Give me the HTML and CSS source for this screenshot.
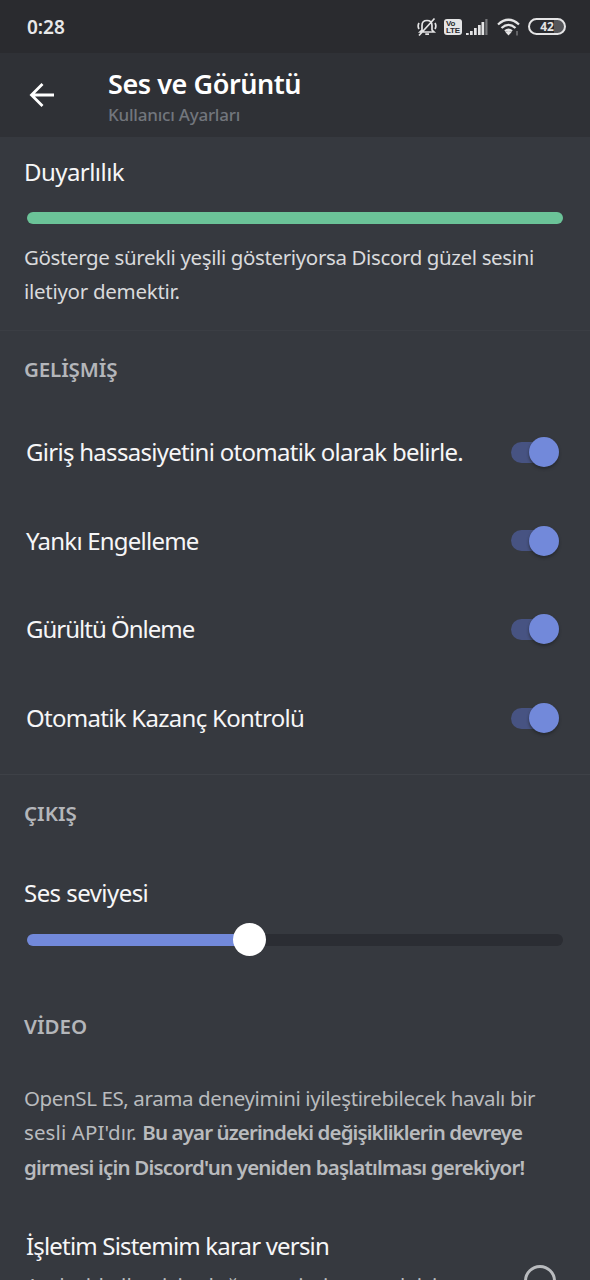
FILE: index.html
```html
<!DOCTYPE html>
<html lang="tr">
<head>
<meta charset="utf-8">
<title>Ses ve Görüntü</title>
<link rel="stylesheet" href="styles.css">
</head>
<body>
<div class="screen">
  <div class="status">
    <span class="clock">0:28</span>
    <div class="status-icons">
      <svg class="bell" width="20" height="20" viewBox="0 0 20 20" fill="none" stroke="#e4e4e5" stroke-width="1.7">
        <path d="M5 14V8.500C5 5.500 7 3.500 10 3.500S15 5.500 15 8.500V13L17 15H3L5 13M8.300 17.200H12M17.500 1.500 2 18.500M2 6Q.3 9 2 12M18 6Q19.700 9 18 12"/>
      </svg>
      <div class="volte"><span>Vo</span><span>LTE</span></div>
      <svg class="signal" width="22" height="16" viewBox="0 0 22 16" fill="#e4e4e5">
        <path d="M0 14h2.700v2H0zM4 12h2.700v4H4zM8 9h2.700v7H8zM12 6h2.700v10H12zM15.500 3h2.700v13h-2.700z"/><path fill="#77787b" d="M19.300 0h2.200v16h-2.200z"/>
      </svg>
      <svg class="wifi" width="24" height="18" viewBox="0 0 24 18" fill="none" stroke="#e4e4e5" stroke-width="2.300">
        <path d="M1 6.500Q11.500-3 22 6.500M4.500 10Q11.500 3.700 18.500 10M8 13.200Q11.500 10.400 15 13.200"/><path fill="#e4e4e5" stroke="none" d="M8.500 14.200Q11.500 12 14.500 14.200L11.500 17.500z"/><path stroke="#77787b" stroke-width="1.500" d="M20 13v4.500"/>
      </svg>
      <div class="battery">42</div>
    </div>
  </div>
  <header class="header">
    <svg class="back" width="26" height="26" viewBox="0 0 26 26" fill="none" stroke="#fff" stroke-width="2.800"><path d="M25 13H3M13.500 2 2.500 13l11 11"/></svg>
    <div class="titles"><h1>Ses ve Görüntü</h1><p>Kullanıcı Ayarları</p></div>
  </header>
  <section class="sensitivity">
    <h2 class="label duy">Duyarlılık</h2>
    <div class="meter"></div>
    <p class="copy"><span class="c1">Gösterge sürekli yeşili gösteriyorsa Discord güzel sesini</span><br><span class="c2">iletiyor demektir.</span></p>
  </section>
  <section class="advanced">
    <h3 class="heading g">GELİŞMİŞ</h3>
    <div class="row"><span class="label r1">Giriş hassasiyetini otomatik olarak belirle.</span><i class="switch"></i></div>
    <div class="row"><span class="label r2">Yankı Engelleme</span><i class="switch"></i></div>
    <div class="row"><span class="label r3">Gürültü Önleme</span><i class="switch"></i></div>
    <div class="row"><span class="label r4">Otomatik Kazanç Kontrolü</span><i class="switch"></i></div>
  </section>
  <section class="output">
    <h3 class="heading o">ÇIKIŞ</h3>
    <h2 class="label ses">Ses seviyesi</h2>
    <div class="slider"><div class="fill"></div><div class="knob"></div><div class="rest"></div></div>
  </section>
  <section class="video">
    <h3 class="heading v">VİDEO</h3>
    <p class="copy muted"><span class="p1">OpenSL ES, arama deneyimini iyileştirebilecek havalı bir</span><br><span class="p2">sesli API'dır. </span><b class="p3">Bu ayar üzerindeki değişikliklerin devreye</b><br><b class="p4">girmesi için Discord'un yeniden başlatılması gerekiyor!</b></p>
    <div class="choice">
      <div><div class="label os">İşletim Sistemim karar versin</div><p class="hint">Android ailen için doğru seçimi yapmak için</p></div>
      <i class="radio"></i>
    </div>
  </section>
</div>
</body>
</html>
```
FILE: styles.css
```css
* { box-sizing: border-box; margin: 0; padding: 0; }
body { background: #36393f; font-family: "Noto Sans", "Open Sans", sans-serif; color: #f6f6f7; }
.screen { width: 590px; height: 1280px; overflow: hidden; display: flex; flex-direction: column; }
.screen > * { flex-shrink: 0; }
.status { height: 53px; background: #2a2b2f; display: flex; justify-content: space-between; padding: 0 24px 0 27px; align-items: center; }
.clock { font: 600 19px/26px "Noto Sans", sans-serif; color: #e8e8e9; }
.status-icons { display: flex; align-items: center; }
.volte { width: 18px; height: 16px; margin: 0 4px 0 7px; background: #e4e4e5; border-radius: 3px; color: #2a2b2f; font: 700 8px/7px "Liberation Sans", sans-serif; letter-spacing: -0.2px; padding: 1px 1px 0 2px; display: flex; flex-direction: column; }
.wifi { margin: 0 7px 0 9px; }
.battery { width: 38px; height: 17px; border: 2px solid #e4e4e5; border-radius: 9px; font: 700 12px/13px "Noto Sans", sans-serif; text-align: center; color: #e4e4e5; background: linear-gradient(90deg, #2a2b2f 72%, #55565a 72%); }
.header { height: 84px; background: #2f3136; display: flex; align-items: center; padding-left: 29px; }
.titles { margin-left: 53px; padding-top: 5px; }
h1 { font-size: 27px; line-height: 34px; font-weight: 600; color: #fff; white-space: nowrap; letter-spacing: -0.43px; }
.titles p { font-size: 17px; line-height: 28px; font-weight: 500; color: #72767d; white-space: nowrap; letter-spacing: -0.22px; }
.label { font-size: 24px; line-height: 34px; font-weight: 400; white-space: nowrap; }
.sensitivity { height: 194px; padding: 18px 24px 0; border-bottom: 1px solid #3b3e44; }
.meter { height: 12px; margin: 23px 3px 0; border-radius: 6px; background: #6bc398; }
.copy { font-size: 20.5px; line-height: 34.4px; color: #d9dadc; white-space: nowrap; }
.sensitivity .copy { margin-top: 16px; }
.advanced { height: 444px; padding: 23px 24px 0; border-bottom: 1px solid #3e4147; }
.heading { font-size: 20.5px; line-height: 30px; font-weight: 600; color: #b4b6ba; }
.row { height: 88.6px; display: flex; align-items: center; justify-content: space-between; padding: 0 7px 0 2px; }
.advanced .heading { margin-bottom: 24px; letter-spacing: -0.12px; }
.switch { width: 48px; height: 31px; display: flex; align-items: center; }
.switch::before { content: ""; width: 32px; height: 21px; border-radius: 11px; background: #475382; }
.switch::after { content: ""; flex: none; width: 30px; height: 30px; margin-left: -14px; border-radius: 50%; background: #7289da; box-shadow: 0 2px 3px #202225aa; }
.output { height: 212px; padding: 23px 24px 0; }
.ses { margin-top: 48px; }
.slider { display: flex; align-items: center; height: 33px; margin: 13px 3px 0; }
.fill { width: 222px; height: 12px; border-radius: 6px; background: #7289da; }
.knob { flex: none; width: 33px; height: 33px; border-radius: 50%; background: #fff; margin: 0 -2px 0 -16px; z-index: 1; }
.rest { flex: 1; height: 12px; border-radius: 0 6px 6px 0; background: #2b2d33; }
.video { padding: 24px 24px 0; }
.video .copy { margin-top: 40px; }
.muted { color: #b9bbbe; }
.copy b { font-weight: 600; }
.choice { display: flex; justify-content: space-between; padding: 45px 10px 0 2px; }
.hint { font-size: 20.5px; line-height: 34px; color: #b9bbbe; white-space: nowrap; padding-top: 5px; letter-spacing: 0.17px; }
.radio { width: 32px; height: 32px; border: 3px solid #b9bbbe; border-radius: 50%; margin-top: 36px; }
.duy, .ses { letter-spacing: -0.55px; }
.c1 { letter-spacing: -0.375px; }
.c2 { letter-spacing: -0.28px; }
.r1 { letter-spacing: -0.71px; }
.r2 { letter-spacing: -0.78px; }
.r3 { letter-spacing: -1px; }
.r4 { letter-spacing: -0.71px; }
.p1 { letter-spacing: -0.39px; }
.p2 { letter-spacing: 0.1px; }
.p3 { letter-spacing: -0.89px; }
.p4 { letter-spacing: -0.8px; }
.os { letter-spacing: -0.82px; }
```
